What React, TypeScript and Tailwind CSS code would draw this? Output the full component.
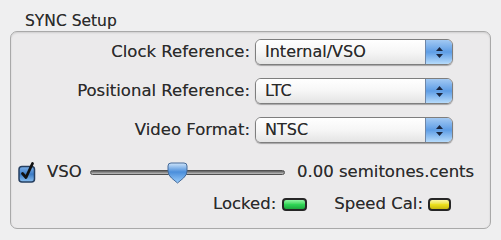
import React from "react";

const font = { fontFamily: '"DejaVu Sans", Verdana, sans-serif' };

function Popup({ value }: { value: string }) {
  return (
    <div className="flex h-[26px] w-[198px] rounded-[6px] border border-[#7e7e7e] shadow-[0_1px_1px_rgba(0,0,0,0.3)] overflow-hidden">
      <div className="flex flex-1 items-center pl-[9px] bg-gradient-to-b from-white via-[#f6f6f6] to-[#e4e4e4] text-[16px] leading-none text-[#2a2a2a]">
        {value}
      </div>
      <div className="flex w-[27px] flex-col items-center justify-center gap-[3px] border-l border-[#6f86a6] bg-gradient-to-b from-[#a2c9f3] via-[#5e9de5] to-[#b6dbfb]">
        <svg width="7" height="4" viewBox="0 0 7 4">
          <path d="M3.5 0 L7 4 L0 4 Z" fill="#1b2740" />
        </svg>
        <svg width="7" height="4" viewBox="0 0 7 4">
          <path d="M0 0 L7 0 L3.5 4 Z" fill="#1b2740" />
        </svg>
      </div>
    </div>
  );
}

function Checkbox() {
  return (
    <svg width="20" height="22" viewBox="0 0 20 22">
      <defs>
        <linearGradient id="cb" x1="0" y1="0" x2="0" y2="1">
          <stop offset="0" stopColor="#7fb2ea" />
          <stop offset="0.5" stopColor="#3c7cc6" />
          <stop offset="1" stopColor="#8cc1f2" />
        </linearGradient>
      </defs>
      <rect x="1" y="5.5" width="15.5" height="15.5" rx="3" fill="url(#cb)" stroke="#263f60" strokeWidth="1.5" />
      <path d="M4.5 12.5 L8 16.5 L14.5 2.5" fill="none" stroke="#111" strokeWidth="2.8" strokeLinecap="round" strokeLinejoin="round" />
    </svg>
  );
}

function Thumb() {
  return (
    <svg width="21" height="22" viewBox="0 0 21 22">
      <defs>
        <linearGradient id="th" x1="0" y1="0" x2="0" y2="1">
          <stop offset="0" stopColor="#cfe5fb" />
          <stop offset="0.45" stopColor="#4a8edb" />
          <stop offset="1" stopColor="#9bcdfb" />
        </linearGradient>
      </defs>
      <path
        d="M4 1 H17 Q20 1 20 4 V9 Q20 13 16.5 16 L10.5 21 L4.5 16 Q1 13 1 9 V4 Q1 1 4 1 Z"
        fill="url(#th)"
        stroke="#466b99"
      />
    </svg>
  );
}

function Led({ color }: { color: "green" | "yellow" }) {
  return (
    <div
      className={`h-[13px] rounded-[4px] border-2 border-[#262626] ${
        color === "green"
          ? "w-[25px] bg-gradient-to-b from-[#8ff5a4] via-[#2fd656] to-[#1fa83e]"
          : "w-[23px] bg-gradient-to-b from-[#fbf7a0] via-[#ece11e] to-[#c8b90e]"
      }`}
    />
  );
}

export default function App() {
  return (
    <div
      className="h-[240px] w-[501px] bg-[#efeff0] pt-[11px] text-[#2b2b2b] [text-shadow:0_0_0.6px_rgba(0,0,0,0.45)]"
      style={font}
    >
      <div className="h-[20px] pl-[25px] text-[15.5px] leading-[20px]">SYNC Setup</div>

      <div className="ml-[10px] h-[198px] w-[481px] rounded-[7px] border border-[#a9a9a9] bg-[#ebeaeb] pt-[7px] shadow-[inset_0_1px_2px_rgba(0,0,0,0.12)]">
        <div className="grid grid-cols-[239px_198px] gap-x-[5px] gap-y-[13px] items-center">
          <div className="text-right text-[16.5px] leading-none">Clock Reference:</div>
          <Popup value="Internal/VSO" />
          <div className="text-right text-[16.5px] leading-none">Positional Reference:</div>
          <Popup value="LTC" />
          <div className="text-right text-[16.5px] leading-none">Video Format:</div>
          <Popup value="NTSC" />
        </div>

        <div className="mt-[18px] flex h-[22px] items-center pl-[7px]">
          <div className="w-[29px]">
            <Checkbox />
          </div>
          <div className="w-[43px] text-[16.5px] leading-none">VSO</div>
          <div className="relative flex h-[22px] w-[195px] items-center">
            <div className="h-[5px] w-full rounded-full border border-[#4f4f4f] bg-gradient-to-b from-[#5e5e5e] to-[#c2c2c2]" />
            <div className="absolute left-[77px] top-[1px]">
              <Thumb />
            </div>
          </div>
          <div className="ml-[12px] text-[16.5px] leading-none">0.00 semitones.cents</div>
        </div>

        <div className="mt-[13px] flex h-[16px] items-center justify-end pr-[39px] text-[16.5px] leading-none">
          <span>Locked:</span>
          <div className="ml-[6px]">
            <Led color="green" />
          </div>
          <span className="ml-[27px]">Speed Cal:</span>
          <div className="ml-[5px]">
            <Led color="yellow" />
          </div>
        </div>
      </div>
    </div>
  );
}
